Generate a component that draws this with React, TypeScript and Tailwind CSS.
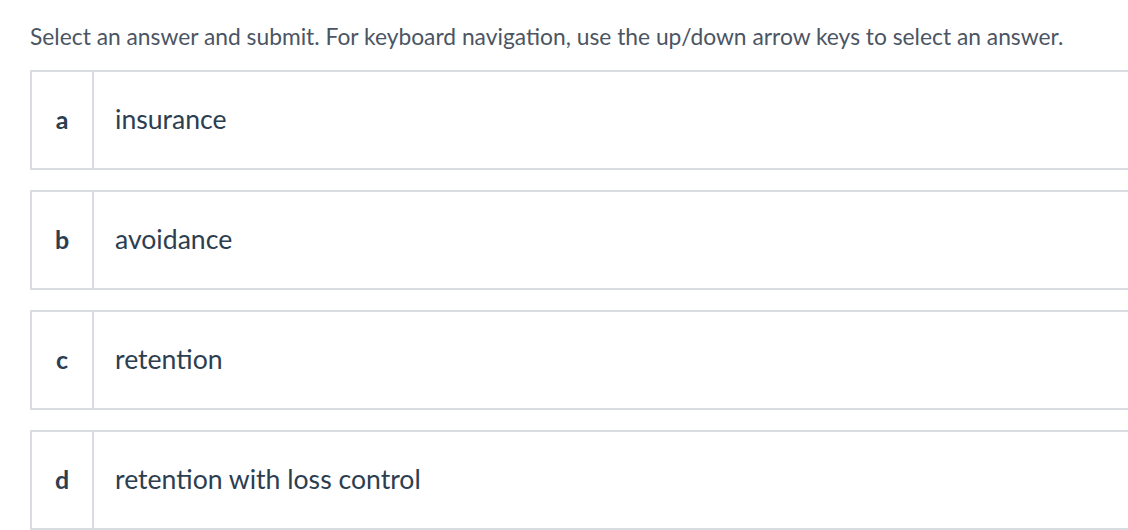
const options = [
  { letter: 'a', text: 'insurance' },
  { letter: 'b', text: 'avoidance' },
  { letter: 'c', text: 'retention' },
  { letter: 'd', text: 'retention with loss control' },
]

export default function App() {
  return (
    <div
      className="w-[1128px] h-[530px] overflow-hidden bg-white pl-[30px] pt-[22px]"
      style={{ fontFamily: 'Lato, "Noto Sans", sans-serif' }}
    >
      <p className="text-[22.8px] leading-[28px] text-[#4b5563] whitespace-nowrap">
        Select an answer and submit. For keyboard navigation, use the up/down arrow keys to select an answer.
      </p>
      <div className="mt-[20px] flex flex-col gap-[20px]">
        {options.map((o) => (
          <div key={o.letter} className="flex w-[1120px] h-[100px] border-2 border-[#d9dde2] bg-white">
            <div className="w-[60px] flex items-center justify-center text-[25px] font-bold text-[#2c3e50]">
              {o.letter}
            </div>
            <div className="flex-1 flex items-center border-l-2 border-[#d9dde2] pl-[21px] text-[26.6px] text-[#2c3e50]">
              {o.text}
            </div>
          </div>
        ))}
      </div>
    </div>
  )
}
